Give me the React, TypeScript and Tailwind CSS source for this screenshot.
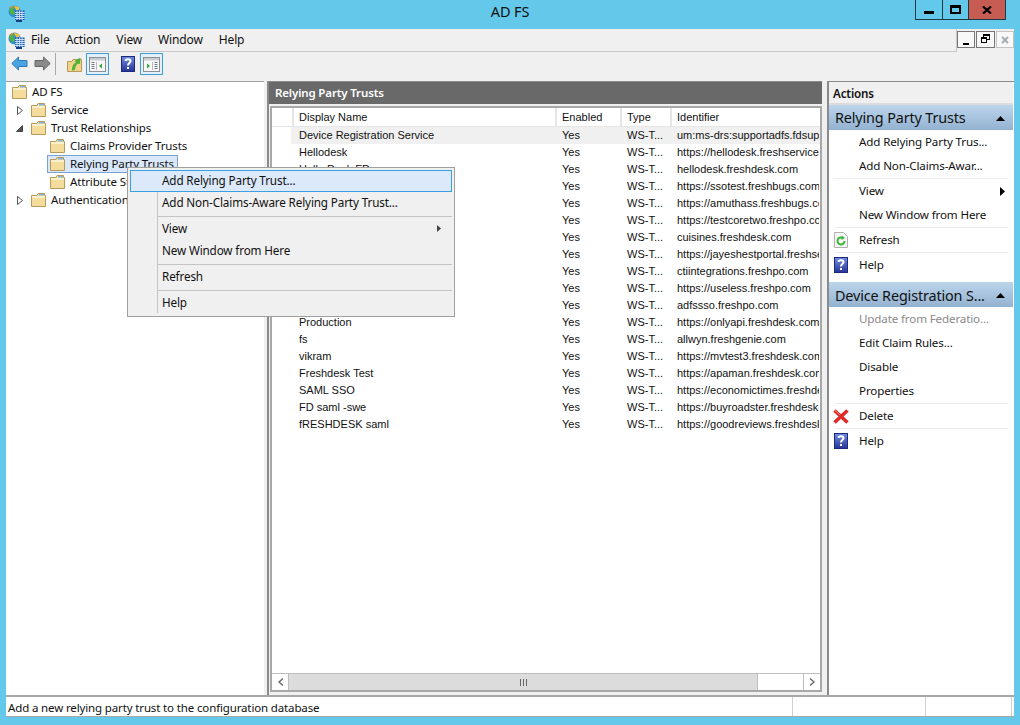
function AppIcon() {
  return (
    <svg width="17" height="17" viewBox="0 0 17 17" className="shrink-0">
      <circle cx="6.5" cy="6.5" r="6" fill="#2f8fd8" />
      <path d="M1 5 L4 1.5 L6.5 2.5 L5 5 L7 7 L6 10 L3 9.5 Z" fill="#4fb33f" />
      <path d="M5.5 0.7 L11 2 L11 5 L8 5 L7 3 Z" fill="#f5c02c" />
      <path d="M1.5 3 L4 1 L5.5 1 L3.5 3.5 Z" fill="#ee8a2a" />
      <rect x="7" y="5.5" width="9.5" height="9.5" fill="#1f5fb4" />
      <path d="M7 7.5h9.5M7 9.5h9.5M7 11.5h9.5M7 13.5h9.5M9 5.5v9.5M11.5 5.5v9.5M14 5.5v9.5" stroke="#d5e8f8" strokeWidth="0.9" />
      <rect x="8" y="15" width="6" height="2" fill="#123f86" />
    </svg>
  );
}

function Folder() {
  return (
    <svg width="15" height="14" viewBox="0 0 15 14" className="shrink-0">
      <path d="M0.5 2.5 H6 L7 0.5 H13.5 V2.5 H14.5 V13.5 H0.5 Z" fill="#f3dc9c" stroke="#b89b5a" />
      <rect x="8" y="1" width="5" height="1.5" fill="#7fb6de" />
      <rect x="1" y="3" width="13" height="2" fill="#fbf0cc" />
    </svg>
  );
}

function HelpIcon() {
  return (
    <svg width="14" height="16" viewBox="0 0 14 16" className="shrink-0">
      <defs>
        <linearGradient id="hb" x1="0" y1="0" x2="0" y2="1">
          <stop offset="0" stopColor="#6f8fe0" />
          <stop offset="1" stopColor="#26339a" />
        </linearGradient>
      </defs>
      <rect x="0.5" y="0.5" width="13" height="15" fill="url(#hb)" stroke="#1d2a7c" />
      <path d="M4.5 5 C4.5 2.5 9.5 2.5 9.5 5 C9.5 7 7 7 7 9.5" fill="none" stroke="#fff" strokeWidth="2" />
      <rect x="6" y="11" width="2" height="2" fill="#fff" />
    </svg>
  );
}

function RefreshIcon() {
  return (
    <svg width="14" height="16" viewBox="0 0 14 16" className="shrink-0">
      <path d="M0.5 0.5 H9.5 L13.5 4.5 V15.5 H0.5 Z" fill="#f6f6f6" stroke="#b0b0b0" />
      <path d="M10.5 9 A3.5 3.5 0 1 1 8.5 5.8" fill="none" stroke="#3fb53f" strokeWidth="2" />
      <path d="M7.5 3.5 L11 6 L7.5 8 Z" fill="#3fb53f" />
    </svg>
  );
}

function DeleteIcon() {
  return (
    <svg width="16" height="15" viewBox="0 0 16 15" className="-ml-[1px] shrink-0">
      <path d="M1.5 1.5 L14.5 13.5 M14.5 1.5 L1.5 13.5" stroke="#e02a2a" strokeWidth="3.6" />
      <path d="M1.5 1 L7 6" stroke="#f58a8a" strokeWidth="1" />
    </svg>
  );
}

function PaneIcon({ side }: { side: "left" | "right" }) {
  return (
    <svg width="17" height="15" viewBox="0 0 17 15">
      <rect x="0.5" y="0.5" width="16" height="14" fill="#f7f7f7" stroke="#8a8f94" />
      <rect x="1" y="1" width="15" height="2.5" fill="#c9ced3" />
      {side === "left" ? (
        <>
          <path d="M2.5 5.5h3M2.5 7.5h3M2.5 9.5h3M2.5 11.5h3" stroke="#6d7a86" />
          <path d="M7.5 5V13" stroke="#b5bbc0" />
          <path d="M13 6.5 L10 9 L13 11.5 Z" fill="#35a835" />
        </>
      ) : (
        <>
          <path d="M11.5 5.5h3M11.5 7.5h3M11.5 9.5h3M11.5 11.5h3" stroke="#6d7a86" />
          <path d="M9.5 5V13" stroke="#b5bbc0" />
          <path d="M4 6.5 L7 9 L4 11.5 Z" fill="#35a835" />
        </>
      )}
    </svg>
  );
}

function Arrow({ dir, fill, stroke }: { dir: "left" | "right"; fill: string; stroke: string }) {
  return (
    <svg width="17" height="15" viewBox="0 0 17 15" className={dir === "right" ? "-scale-x-100" : ""}>
      <path d="M0.8 7.5 L7.5 1 V4.5 H16 V10.5 H7.5 V14 Z" fill={fill} stroke={stroke} />
    </svg>
  );
}

function UpFolder() {
  return (
    <svg width="15" height="15" viewBox="0 0 15 15">
      <path d="M0.5 4.5 H5 L6 2.5 H14.5 V14.5 H0.5 Z" fill="#f0d48a" stroke="#b89b5a" />
      <path d="M5 13.5 C5 9 6 7 9 5.5 L7.5 4 L13.5 0.5 L13 7 L11 6.5 C9 8 8 10 8 13 Z" fill="#4fb33a" />
    </svg>
  );
}

function Expander({ open }: { open?: boolean }) {
  return open ? (
    <svg width="7" height="7" viewBox="0 0 7 7">
      <path d="M6.5 0.5 V6.5 H0.5 Z" fill="#555" stroke="#444" />
    </svg>
  ) : (
    <svg width="6" height="9" viewBox="0 0 6 9">
      <path d="M0.5 0.5 L5.5 4.5 L0.5 8.5 Z" fill="#fff" stroke="#555" />
    </svg>
  );
}

function TreeRow({
  label,
  depth,
  expander,
  selected,
}: {
  label: string;
  depth: 0 | 1 | 2;
  expander?: "open" | "closed";
  selected?: boolean;
}) {
  const pad = depth === 0 ? "pl-[6px]" : depth === 1 ? "pl-[25px]" : "pl-[44px]";
  return (
    <div className={`relative flex h-[18px] items-center ${pad}`}>
      {expander && (
        <span className="absolute left-[9px] top-[5px] flex h-[9px] w-[9px] items-center justify-center">
          <Expander open={expander === "open"} />
        </span>
      )}
      <div
        className={`flex h-[18px] items-center gap-[5px] whitespace-nowrap pr-[3px] ${
          selected ? "-ml-[3px] border border-[#7da2ce] bg-[#d9e8fb] pl-[2px]" : ""
        }`}
      >
        <Folder />
        <span>{label}</span>
      </div>
    </div>
  );
}

const rows = [
  ["Device Registration Service", "um:ms-drs:supportadfs.fdsupport.com"],
  ["Hellodesk", "https://hellodesk.freshservice.com"],
  ["Hello Desk FD", "hellodesk.freshdesk.com"],
  ["", "https://ssotest.freshbugs.com"],
  ["", "https://amuthass.freshbugs.com"],
  ["", "https://testcoretwo.freshpo.com"],
  ["", "cuisines.freshdesk.com"],
  ["", "https://jayeshestportal.freshservice.com"],
  ["", "ctiintegrations.freshpo.com"],
  ["", "https://useless.freshpo.com"],
  ["", "adfssso.freshpo.com"],
  ["Production", "https://onlyapi.freshdesk.com"],
  ["fs", "allwyn.freshgenie.com"],
  ["vikram", "https://mvtest3.freshdesk.com"],
  ["Freshdesk Test", "https://apaman.freshdesk.com"],
  ["SAML SSO", "https://economictimes.freshdesk.com"],
  ["FD saml -swe", "https://buyroadster.freshdesk.com"],
  ["fRESHDESK saml", "https://goodreviews.freshdesk.com"],
];

function ListHeader({ label, className }: { label: string; className: string }) {
  return (
    <div className={`flex h-[18px] shrink-0 items-center border-r-2 border-[#e6e6e6] pl-[5px] pt-[1px] ${className}`}>
      {label}
    </div>
  );
}

function ActionItem({
  label,
  icon,
  disabled,
  arrow,
  line,
  tall,
}: {
  label: string;
  icon?: React.ReactNode;
  disabled?: boolean;
  arrow?: boolean;
  line?: boolean;
  tall?: boolean;
}) {
  return (
    <div
      className={`relative mx-[5px] flex items-center ${tall ? "h-[25px]" : "h-[24px]"} ${
        line ? "border-t border-[#ececec]" : ""
      }`}
    >
      <span className="flex w-[25px] shrink-0 justify-start">{icon}</span>
      <span className={`whitespace-nowrap ${disabled ? "text-[#8a8a8a]" : ""}`}>{label}</span>
      {arrow && (
        <svg width="5" height="9" viewBox="0 0 5 9" className="absolute right-[3px] top-[8px]">
          <path d="M0 0 L5 4.5 L0 9 Z" fill="#000" />
        </svg>
      )}
    </div>
  );
}

function ActionHeader({ label, low }: { label: string; low?: boolean }) {
  return (
    <div
      className={`flex h-[25px] items-center justify-between bg-gradient-to-b from-[#bcd5ec] to-[#93b2d1] pl-[6px] pr-[8px] text-[14.4px] tracking-[-0.01em] ${
        low ? "pt-[2px]" : "pt-[1px]"
      }`}
    >
      <span className="whitespace-nowrap">{label}</span>
      <svg width="9" height="5" viewBox="0 0 9 5">
        <path d="M4.5 0 L9 5 H0 Z" fill="#000" />
      </svg>
    </div>
  );
}

function MenuItem({ label, hot, arrow }: { label: string; hot?: boolean; arrow?: boolean }) {
  return (
    <div
      className={`relative flex h-[22px] items-center pl-[31px] ${
        hot ? "border border-[#3c9fe0] bg-[#dbe9fb]" : "border border-transparent"
      }`}
    >
      {label}
      {arrow && (
        <svg width="4" height="7" viewBox="0 0 4 7" className="absolute right-[10px] top-[6px]">
          <path d="M0 0 L4 3.5 L0 7 Z" fill="#444" />
        </svg>
      )}
    </div>
  );
}

function MenuSep() {
  return <div className="my-[1px] ml-[28px] h-[2px] border-b border-[#c4c4c4]" />;
}

export default function App() {
  return (
    <div className="flex h-[725px] w-[1020px] flex-col overflow-hidden bg-[#63c8e9] font-['Noto_Sans',sans-serif] text-[11.5px] tracking-[-0.012em] text-[#111]">
      {/* title bar */}
      <div className="relative flex h-[29px] shrink-0 items-start pl-[8px] pt-[5px]">
        <AppIcon />
        <div className="absolute inset-x-0 top-0 text-center text-[14.5px] leading-[22px]">AD FS</div>
        <div className="absolute right-[14px] top-0 flex h-[20px] border-b border-l border-r border-[#1d3a46]">
          <div className="flex w-[27px] items-center justify-center border-r border-[#1d3a46]">
            <div className="mt-[5px] h-[3px] w-[10px] bg-black" />
          </div>
          <div className="flex w-[26px] items-center justify-center border-r border-[#1d3a46]">
            <div className="h-[9px] w-[11px] border-2 border-t-[3px] border-black" />
          </div>
          <div className="flex w-[36px] items-center justify-center bg-[#c75c52]">
            <svg width="10" height="8" viewBox="0 0 10 8">
              <path d="M1 0.5 L9 7.5 M9 0.5 L1 7.5" stroke="#000" strokeWidth="2.2" />
            </svg>
          </div>
        </div>
      </div>

      {/* window body */}
      <div className="mx-[6px] flex h-[688px] flex-col bg-[#f0f0f0]">
        {/* menu bar */}
        <div className="flex h-[23px] shrink-0 text-[12px]">
          <div className="flex flex-1 items-center gap-[16px] border-b border-r border-[#c8c8c8] pl-[2px]">
            <AppIcon />
            <div className="-ml-[10px] flex gap-[16px]">
              <span>File</span>
              <span>Action</span>
              <span>View</span>
              <span>Window</span>
              <span>Help</span>
            </div>
          </div>
          <div className="flex w-[57px] gap-[1px] pt-[2px]">
            <div className="flex h-[17px] w-[18px] items-end justify-center border border-[#777] bg-[#f8f8f8] pb-[2px]">
              <div className="h-[2px] w-[6px] bg-black" />
            </div>
            <div className="relative h-[17px] w-[19px] border border-[#777] bg-[#f8f8f8]">
              <div className="absolute left-[6px] top-[2px] h-[6px] w-[7px] border border-t-2 border-black" />
              <div className="absolute left-[4px] top-[5px] h-[6px] w-[6px] border border-t-2 border-black bg-[#f8f8f8]" />
            </div>
            <div className="flex h-[17px] w-[18px] items-center justify-center border border-[#c4c4c4] bg-[#f8f8f8]">
              <svg width="8" height="8" viewBox="0 0 8 8">
                <path d="M1 1 L7 7 M7 1 L1 7" stroke="#a3acb5" strokeWidth="2" />
              </svg>
            </div>
          </div>
        </div>

        {/* toolbar */}
        <div className="flex h-[29px] shrink-0 items-start pl-[5px] pt-[1px]">
          <div className="mt-[3px]">
            <Arrow dir="left" fill="#4ba3e4" stroke="#2f78b8" />
          </div>
          <div className="ml-[6px] mt-[3px]">
            <Arrow dir="right" fill="#8a8a8a" stroke="#666" />
          </div>
          <div className="ml-[4px] h-[22px] w-px bg-[#a8a8a8]" />
          <div className="ml-[11px] mt-[4px]">
            <UpFolder />
          </div>
          <div className="ml-[4px] flex h-[22px] w-[23px] items-center justify-center border border-[#3d9fd6] bg-[#e6f0fa]">
            <PaneIcon side="left" />
          </div>
          <div className="ml-[12px] mt-[3px]">
            <HelpIcon />
          </div>
          <div className="ml-[5px] flex h-[22px] w-[23px] items-center justify-center border border-[#3d9fd6] bg-[#e6f0fa]">
            <PaneIcon side="right" />
          </div>
        </div>

        {/* panes */}
        <div className="flex min-h-0 flex-1">
          <div className="w-[258px] shrink-0 border-t border-[#a0a0a0] bg-white pt-[1px]">
            <TreeRow label="AD FS" depth={0} />
            <TreeRow label="Service" depth={1} expander="closed" />
            <TreeRow label="Trust Relationships" depth={1} expander="open" />
            <TreeRow label="Claims Provider Trusts" depth={2} />
            <TreeRow label="Relying Party Trusts" depth={2} selected />
            <TreeRow label="Attribute Stores" depth={2} />
            <TreeRow label="Authentication Policies" depth={1} expander="closed" />
          </div>

          {/* center pane */}
          <div className="ml-[3px] flex w-[555px] shrink-0 flex-col border-l-2 border-t border-[#8a8a8a] bg-[#f0f0f0]">
            <div className="flex h-[22px] shrink-0 items-center bg-[#696969] pl-[6px] font-semibold text-white">
              Relying Party Trusts
            </div>
            <div className="mx-[1px] mt-[2px] flex min-h-0 w-[552px] flex-1 flex-col border-2 border-[#a8a8a8] bg-white font-['Liberation_Sans',sans-serif] text-[11px] tracking-normal">
              <div className="flex shrink-0 border-b border-[#e6e6e6]">
                <ListHeader label="" className="w-[22px]" />
                <ListHeader label="Display Name" className="w-[263px]" />
                <ListHeader label="Enabled" className="w-[65px]" />
                <ListHeader label="Type" className="w-[50px]" />
                <div className="flex h-[18px] items-center pl-[5px] pt-[1px]">Identifier</div>
              </div>
              <div className="min-h-0 flex-1 overflow-hidden">
                {rows.map(([name, id], i) => (
                  <div
                    key={i}
                    className={`ml-[19px] flex h-[17px] items-center whitespace-nowrap ${i === 0 ? "bg-[#f0f0f0]" : ""}`}
                  >
                    <span className="w-[266px] shrink-0 pl-[8px]">{name}</span>
                    <span className="w-[65px] shrink-0 pl-[5px]">Yes</span>
                    <span className="w-[50px] shrink-0 pl-[5px]">WS-T...</span>
                    <span className="w-[147px] shrink-0 overflow-hidden pl-[5px]">{id}</span>
                  </div>
                ))}
              </div>
              <div className="flex h-[17px] shrink-0 border-t border-[#bdbdbd] pl-[1px]">
                <div className="flex w-[16px] items-center justify-center border-r border-[#bdbdbd]">
                  <svg width="6" height="8" viewBox="0 0 6 8">
                    <path d="M5 0.5 L1 4 L5 7.5" fill="none" stroke="#666" strokeWidth="1.4" />
                  </svg>
                </div>
                <div className="flex w-[469px] items-center justify-center border-r border-[#bdbdbd] bg-[#dcdcdc]">
                  <div className="h-[7px] w-[7px] border-x border-[#666] bg-[linear-gradient(90deg,transparent_2px,#666_2px,#666_3px,transparent_3px)]" />
                </div>
                <div className="w-[45px] bg-white" />
                <div className="flex w-[16px] items-center justify-center border-l border-[#bdbdbd]">
                  <svg width="6" height="8" viewBox="0 0 6 8">
                    <path d="M1 0.5 L5 4 L1 7.5" fill="none" stroke="#666" strokeWidth="1.4" />
                  </svg>
                </div>
              </div>
            </div>
            <div className="h-[3px] shrink-0" />
          </div>

          {/* actions pane */}
          <div className="ml-[5px] flex min-w-0 flex-1 flex-col border-l-2 border-t border-[#8a8a8a] bg-white pr-[1px] text-[11.6px]">
            <div className="flex h-[23px] shrink-0 items-center border-b-2 border-[#dcdcdc] bg-[#f0f0f0] pl-[4px] pt-[2px] font-semibold">
              Actions
            </div>
            <ActionHeader label="Relying Party Trusts" />
            <ActionItem label="Add Relying Party Trus..." />
            <ActionItem label="Add Non-Claims-Awar..." />
            <ActionItem label="View" arrow line />
            <ActionItem label="New Window from Here" tall />
            <ActionItem label="Refresh" icon={<RefreshIcon />} line tall />
            <ActionItem label="Help" icon={<HelpIcon />} line tall />
            <div className="mt-[5px]">
              <ActionHeader label="Device Registration S..." low />
            </div>
            <ActionItem label="Update from Federatio..." disabled />
            <ActionItem label="Edit Claim Rules..." />
            <ActionItem label="Disable" />
            <ActionItem label="Properties" />
            <ActionItem label="Delete" icon={<DeleteIcon />} line tall />
            <ActionItem label="Help" icon={<HelpIcon />} line tall />
          </div>
        </div>

        {/* status bar */}
        <div className="flex h-[22px] shrink-0 border-y-2 border-b border-[#a8a8a8] bg-white pl-[2px]">
          <div className="w-[785px] shrink-0 border-r border-[#d0d0d0] pt-[1px] leading-[20px]">
            Add a new relying party trust to the configuration database
          </div>
          <div className="w-[133px] shrink-0 border-r border-[#d0d0d0]" />
          <div className="w-[86px] shrink-0 border-r border-[#d0d0d0]" />
        </div>
      </div>

      {/* context menu */}
      <div className="absolute left-[127px] top-[167px] h-[150px] w-[328px] border border-[#a0a0a0] bg-[#f0f0f0] p-[2px] text-[11.7px]">
        <div className="absolute bottom-[3px] left-[29px] top-[24px] w-px bg-[#c4c4c4]" />
        <MenuItem label="Add Relying Party Trust..." hot />
        <MenuItem label="Add Non-Claims-Aware Relying Party Trust..." />
        <MenuSep />
        <MenuItem label="View" arrow />
        <MenuItem label="New Window from Here" />
        <MenuSep />
        <MenuItem label="Refresh" />
        <MenuSep />
        <MenuItem label="Help" />
      </div>
    </div>
  );
}
